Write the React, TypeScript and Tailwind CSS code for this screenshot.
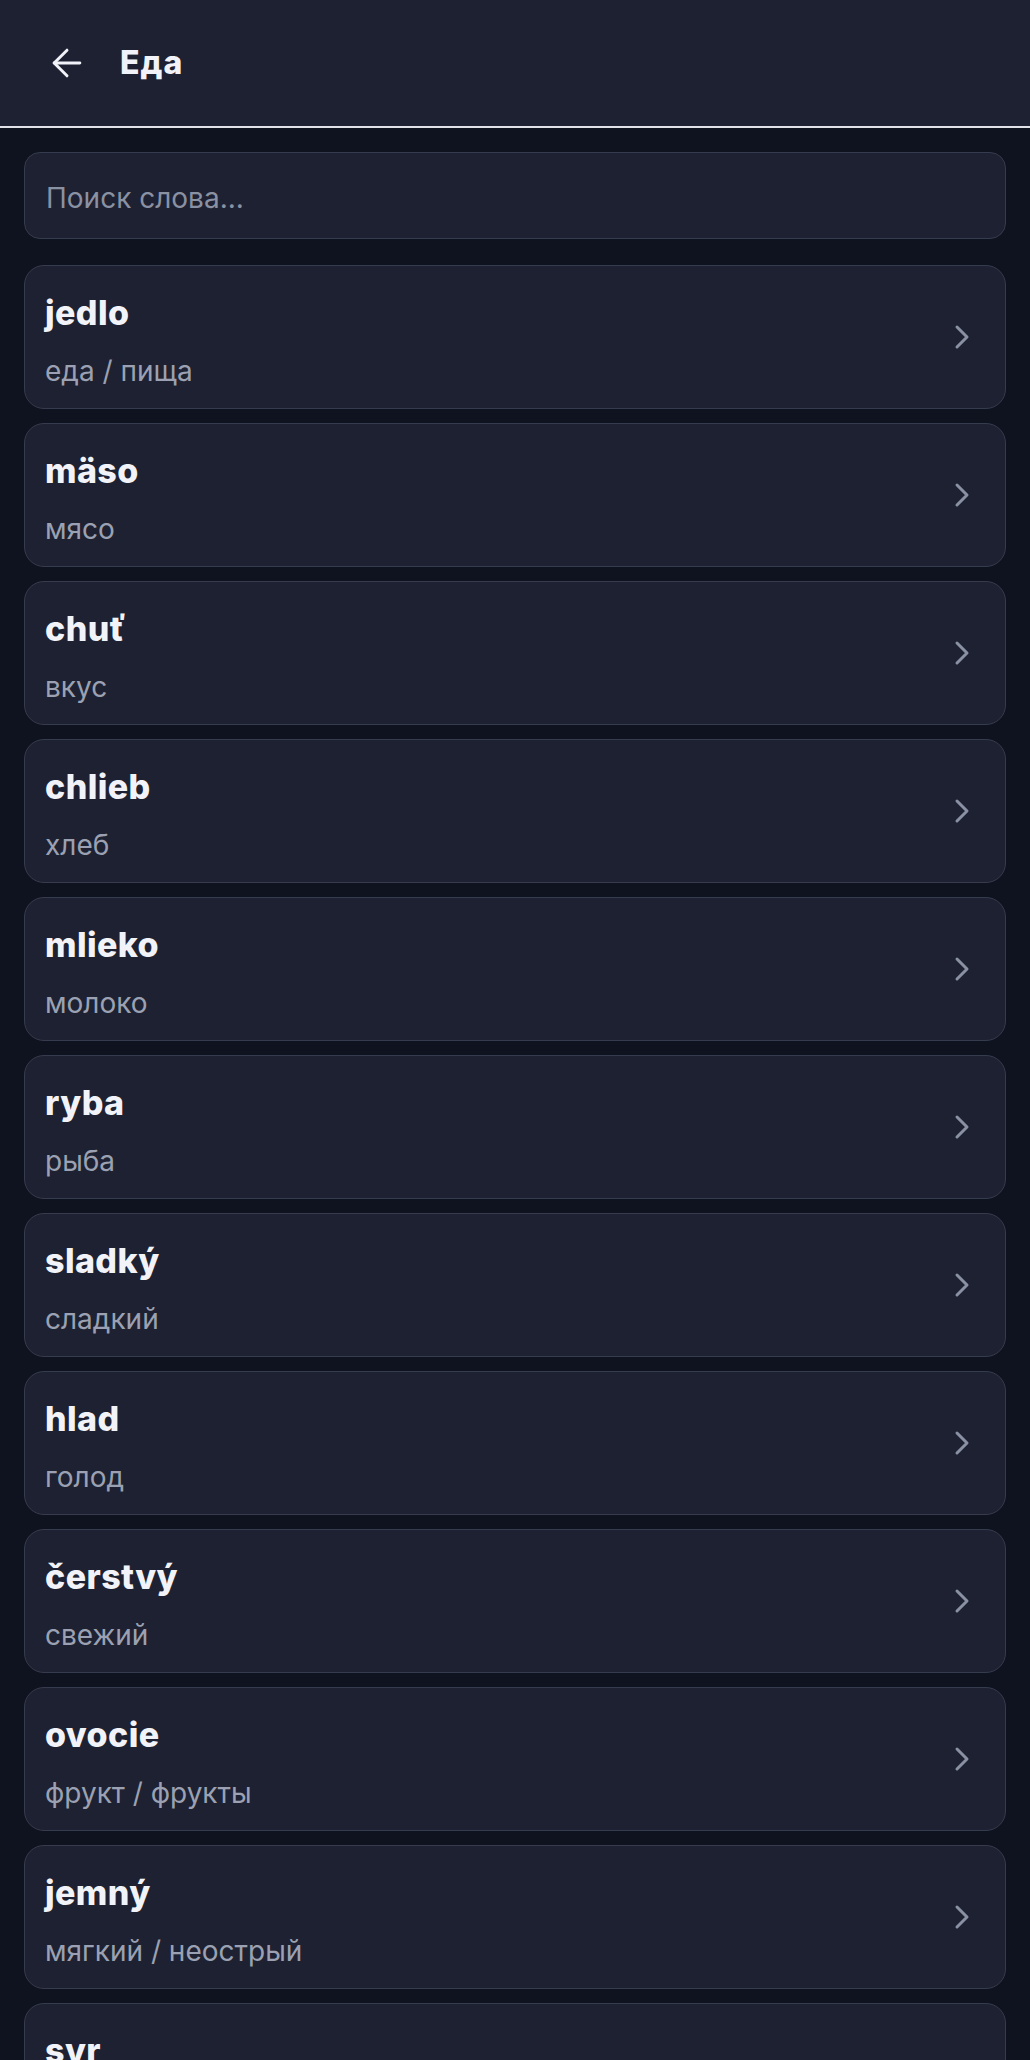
import React from "react";
import { ArrowLeft, ChevronRight } from "lucide-react";

const words: { w: string; t: string }[] = [
  { w: "jedlo", t: "еда / пища" },
  { w: "mäso", t: "мясо" },
  { w: "chuť", t: "вкус" },
  { w: "chlieb", t: "хлеб" },
  { w: "mlieko", t: "молоко" },
  { w: "ryba", t: "рыба" },
  { w: "sladký", t: "сладкий" },
  { w: "hlad", t: "голод" },
  { w: "čerstvý", t: "свежий" },
  { w: "ovocie", t: "фрукт / фрукты" },
  { w: "jemný", t: "мягкий / неострый" },
  { w: "syr", t: "сыр" },
  { w: "voda", t: "вода" },
];

export default function App() {
  return (
    <div
      className="min-h-screen bg-[#0f1320] text-[#f1f3f9]"
      style={{ fontFamily: "Inter, 'Noto Sans', sans-serif" }}
    >
      <header className="h-[128px] bg-[#1e2131] border-b-2 border-[#e1e2e7] flex items-center pl-[45px]">
        <button className="flex items-center justify-center text-[#f1f3f9]" aria-label="Назад">
          <ArrowLeft size={44} strokeWidth={1.6} />
        </button>
        <h1 className="ml-[31px] text-[32px] font-extrabold leading-none tracking-[1px] text-[#f1f3f9]">Еда</h1>
      </header>

      <main className="px-6 pt-6">
        <input
          type="text"
          placeholder="Поиск слова..."
          className="w-full h-[87px] rounded-[16px] border border-[#363c4d] bg-[#1e2131] px-[21px] pt-[5px] text-[28px] text-[#f1f3f9] placeholder:text-[#8a91a3] outline-none"
        />

        <div className="mt-[26px] flex flex-col gap-[14px]">
          {words.map((item) => (
            <div
              key={item.w}
              className="flex items-center justify-between rounded-[20px] border border-[#363c4d] bg-[#1e2131] pl-[20px] pr-[23px] pt-[27px] pb-[19px]"
            >
              <div className="flex flex-col">
                <div className="text-[34px] font-extrabold leading-[40px] tracking-[0.4px] text-[#f1f3f9]">
                  {item.w}
                </div>
                <div className="mt-[20px] text-[28px] leading-[36px] text-[#9ba1b2]">{item.t}</div>
              </div>
              <ChevronRight size={40} strokeWidth={1.8} className="text-[#8a91a3] -mt-[8px]" />
            </div>
          ))}
        </div>
      </main>
    </div>
  );
}
